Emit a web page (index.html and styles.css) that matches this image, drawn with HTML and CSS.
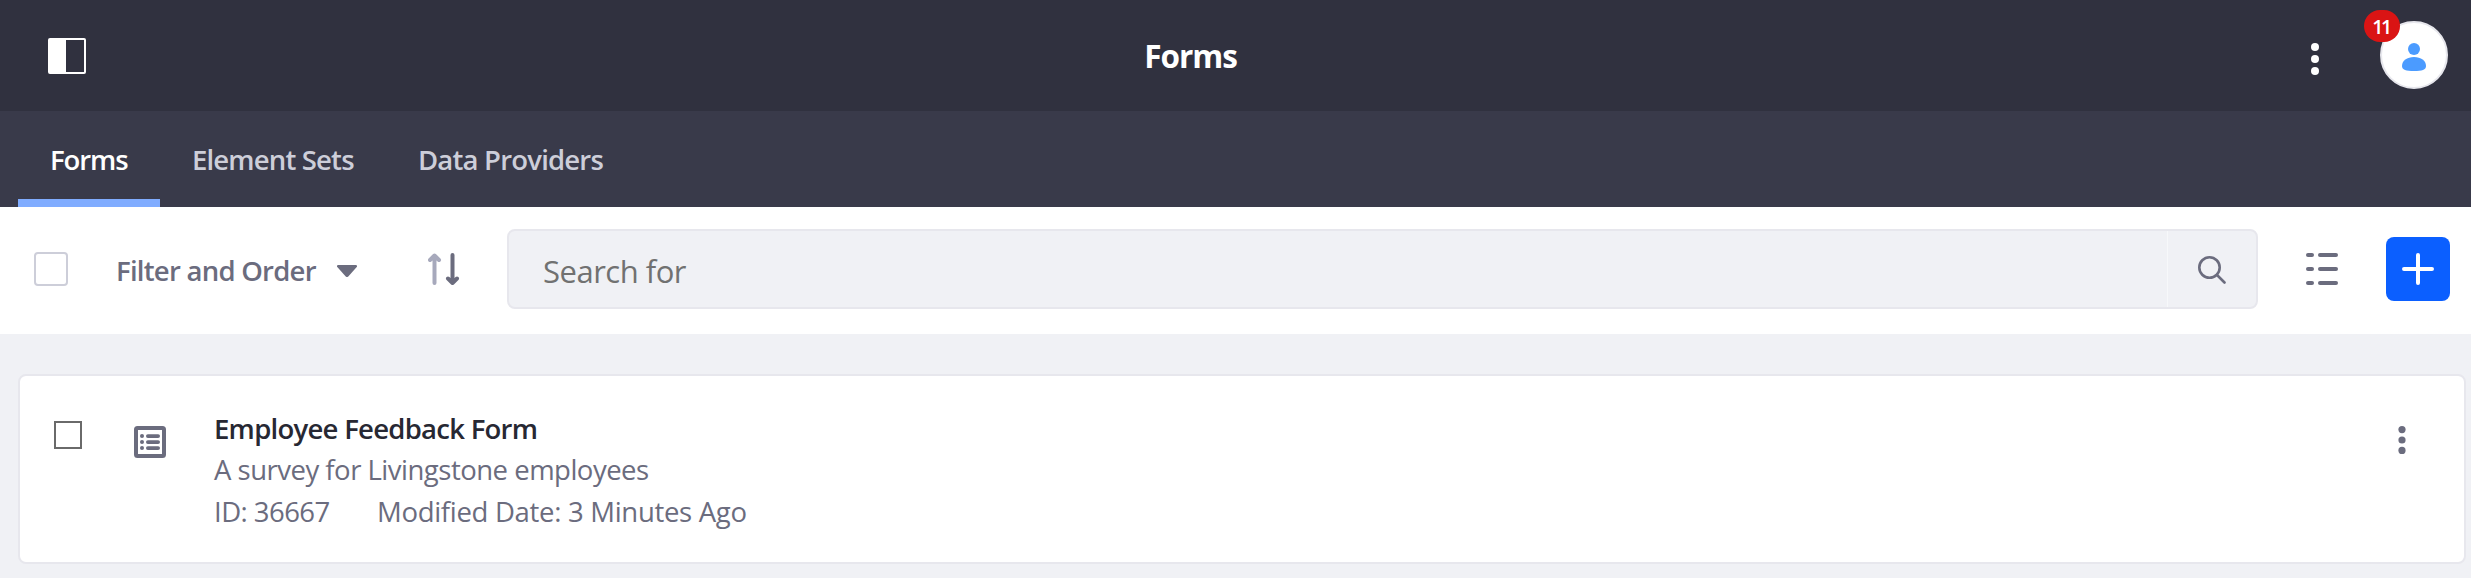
FILE: index.html
```html
<!DOCTYPE html>
<html lang="en">
<head>
<meta charset="utf-8">
<title>Forms</title>
<link rel="stylesheet" href="styles.css">
</head>
<body>
<header class="header">
  <svg class="panel-icon" viewBox="0 0 38 36"><rect x="1" y="1" width="36" height="34" rx="1" fill="none" stroke="#fff" stroke-width="2"/><path d="M1 1h17v34H1z" fill="#fff"/></svg>
  <h1 class="title">Forms</h1>
  <div class="header-actions">
    <svg class="header-dots" viewBox="0 0 8 32"><circle cx="4" cy="4" r="4"/><circle cx="4" cy="16" r="4"/><circle cx="4" cy="28" r="4"/></svg>
    <div class="avatar">
      <svg class="avatar-icon" viewBox="0 0 24 28"><circle cx="12" cy="6" r="6"/><path d="M0 23C0 17.500 5 14 12 14s12 3.500 12 9c0 4-4 5-12 5S0 27 0 23z"/></svg>
      <span class="badge">11</span>
    </div>
  </div>
</header>
<nav class="tabs">
  <a class="tab tab-active"><span class="tab-forms">Forms</span></a>
  <a class="tab"><span class="tab-elements">Element Sets</span></a>
  <a class="tab"><span class="tab-providers">Data Providers</span></a>
</nav>
<section class="toolbar">
  <span class="check-all"></span>
  <span class="filter">Filter and Order</span>
  <svg class="caret" viewBox="0 0 20 12"><path d="M1.500 0h17c1.500 0 2 1.300 1 2.300l-8 9c-1 1-2 1-3 0l-8-9C-.5 1.300 0 0 1.500 0z"/></svg>
  <svg class="sort" viewBox="0 0 32 32" fill="none" stroke-width="4" stroke-linecap="round" stroke-linejoin="round"><path d="M6.500 3v27M2 7l4.500-4.500L11 7" stroke="#a7a9bc"/><path d="M24.500 2v27M20 25.500l4.500 4.500 4.500-4.500" stroke="#6b6c7e"/></svg>
  <div class="search">
    <span class="search-text">Search for</span>
    <span class="search-button"><svg class="search-icon" viewBox="0 0 28 28" fill="none" stroke="#6b6c7e" stroke-width="2.600" stroke-linecap="round"><circle cx="11.500" cy="11.500" r="10.200"/><path d="M19 19l7.500 7.500"/></svg></span>
  </div>
  <svg class="list-icon" viewBox="0 0 32 32"><rect y="0" width="8" height="4" rx="2"/><rect x="12" y="0" width="20" height="4" rx="2"/><rect y="14" width="8" height="4" rx="2"/><rect x="12" y="14" width="20" height="4" rx="2"/><rect y="28" width="8" height="4" rx="2"/><rect x="12" y="28" width="20" height="4" rx="2"/></svg>
  <span class="add"><svg class="add-icon" viewBox="0 0 32 32" stroke="#fff" stroke-width="4" stroke-linecap="round"><path d="M16 2v28M2 16h28"/></svg></span>
</section>
<main class="content">
  <article class="card">
    <span class="card-check"></span>
    <svg class="card-icon" viewBox="0 0 32 32"><rect x="2" y="2" width="28" height="28" rx="1.500" fill="none" stroke="#6b6c7e" stroke-width="4"/><g fill="#6b6c7e"><circle cx="8" cy="10" r="2"/><circle cx="8" cy="16" r="2"/><circle cx="8" cy="22" r="2"/><rect x="12" y="8.200" width="14" height="3.800" rx="1.900"/><rect x="12" y="14.200" width="14" height="3.800" rx="1.900"/><rect x="12" y="20.200" width="14" height="3.800" rx="1.900"/></g></svg>
    <div class="card-body">
      <div class="card-title">Employee Feedback Form</div>
      <div class="card-desc">A survey for Livingstone employees</div>
      <div class="card-meta"><span class="meta-id">ID: 36667</span><span class="meta-date">Modified Date: 3 Minutes Ago</span></div>
    </div>
    <svg class="card-dots" viewBox="0 0 8 28"><circle cx="4" cy="3.600" r="3.600"/><circle cx="4" cy="14" r="3.600"/><circle cx="4" cy="24.400" r="3.600"/></svg>
  </article>
</main>
</body>
</html>
```

FILE: styles.css
```css
* { box-sizing: border-box; }
body {
  margin: 0;
  height: 578px;
  overflow: hidden;
  background: #f0f1f5;
  color: #6b6c7e;
  font: 400 27.5px/42px "Open Sans", "Noto Sans", sans-serif;
  white-space: nowrap;
}
svg { display: block; flex: none; }
.header {
  display: grid;
  grid-template-columns: 1fr auto 1fr;
  align-items: center;
  height: 111px;
  padding: 0 23px 0 48px;
  background: #30313f;
}
.panel-icon { width: 38px; height: 36px; }
.title {
  margin: 1px 115px 0 0;
  color: #fff;
  font-size: 31.5px;
  font-weight: 700;
  letter-spacing: -1px;
}
.header-actions { display: flex; justify-content: flex-end; align-items: center; }
.header-dots { width: 8px; height: 32px; margin: 7px 61px 0 0; fill: #fff; }
.avatar {
  position: relative;
  display: flex;
  justify-content: center;
  align-items: center;
  width: 68px;
  height: 68px;
  margin-bottom: 1px;
  border: 2px solid #e7e7ed;
  border-radius: 50%;
  background: #fff;
}
.avatar-icon { width: 24px; height: 28px; margin-top: 3px; fill: #4b9bff; }
.badge {
  position: absolute;
  left: -18px;
  top: -13px;
  width: 36px;
  height: 32px;
  border-radius: 16px;
  background: #da1414;
  color: #fff;
  font-size: 19.5px;
  font-weight: 600;
  line-height: 33px;
  letter-spacing: -2.5px;
  text-align: center;
  padding-right: 2px;
}
.tabs { display: flex; height: 96px; padding-left: 18px; background: #393a4a; }
.tab {
  display: flex;
  align-items: center;
  padding: 2px 32px 0;
  color: #cdced9;
  font-weight: 600;
}
.tab-active { width: 142px; color: #fff; box-shadow: inset 0 -8px #80acff; }
.tab-forms { letter-spacing: -1.100px; }
.tab-elements { width: 162px; letter-spacing: -0.830px; }
.tab-providers { letter-spacing: -0.800px; }
.toolbar {
  display: flex;
  align-items: center;
  height: 127px;
  padding: 0 21px 3px 34px;
  background: #fff;
}
.check-all { width: 34px; height: 34px; border: 2px solid #cdced9; border-radius: 4px; }
.filter { width: 221px; margin: 3px 0 0 48px; font-weight: 600; letter-spacing: -0.750px; }
.caret { width: 20px; height: 12px; margin-top: 4px; fill: #6b6c7e; }
.sort { width: 32px; height: 32px; margin: 0 47px 0 71px; }
.search {
  display: flex;
  flex: 1;
  height: 80px;
  margin-right: 48px;
  border: 2px solid #e7e7ed;
  border-radius: 8px;
  background: #f0f1f5;
}
.search-text {
  flex: 1;
  padding: 2px 0 0 34px;
  color: #717171;
  font-size: 31px;
  line-height: 76px;
  letter-spacing: -0.500px;
}
.search-button {
  width: 89px;
  padding: 25px 0 0 30px;
  border-left: 1px solid #f7f8fa;
}
.search-icon { width: 28px; height: 28px; }
.list-icon { width: 32px; height: 32px; margin-right: 48px; fill: #6b6c7e; }
.add {
  display: flex;
  align-items: center;
  justify-content: center;
  width: 64px;
  height: 64px;
  border-radius: 8px;
  background: #0b5fff;
}
.add-icon { width: 32px; height: 32px; }
.content { padding: 40px 5px 0 18px; }
.card {
  display: flex;
  align-items: flex-start;
  height: 190px;
  padding: 31px 58px 0 34px;
  border: 2px solid #e7e7ed;
  border-radius: 8px;
  background: #fff;
}
.card-check { width: 28px; height: 28px; margin-top: 14px; border: 2px solid #6a6a6a; }
.card-icon { width: 32px; height: 32px; margin: 19px 48px 0 52px; }
.card-body { flex: 1; }
.card-title { height: 42px; color: #272833; font-weight: 600; line-height: 44px; letter-spacing: -0.730px; }
.card-desc { letter-spacing: -0.500px; }
.card-meta { display: flex; }
.meta-id { width: 163px; letter-spacing: -0.550px; }
.meta-date { letter-spacing: -0.300px; }
.card-dots { width: 8px; height: 28px; margin-top: 19px; fill: #6b6c7e; }
```
